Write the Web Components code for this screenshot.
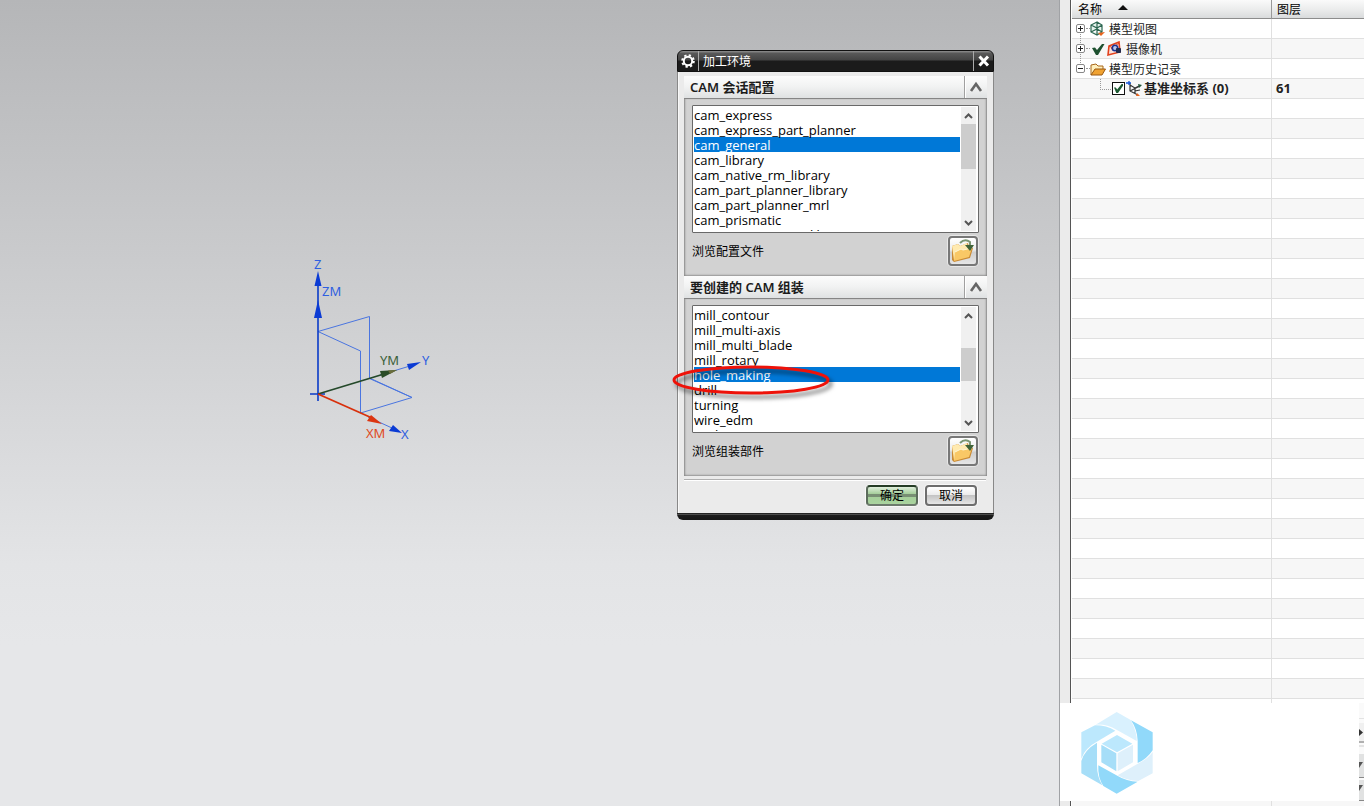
<!DOCTYPE html>
<html lang="zh-CN">
<head>
<meta charset="utf-8">
<title>加工环境</title>
<style>
  html, body { margin: 0; height: 100%; overflow: hidden; }
  body { font-family: "Noto Sans", "Noto Sans CJK SC", sans-serif; font-size: 12px; color: #000; }
</style>
</head>
<body>
<cam-workbench></cam-workbench>
<script>
const define = (name, html, setup) => {
  const tpl = document.createElement('template');
  tpl.innerHTML = html;
  customElements.define(name, class extends HTMLElement {
    connectedCallback() {
      if (this.shadowRoot) return;
      const root = this.attachShadow({ mode: 'open' });
      root.append(tpl.content.cloneNode(true));
      if (setup) setup(this, root);
    }
  });
};

/* Coordinate system drawn in the graphics window */
define('axis-triad', `
<style>
  :host { display: block; width: 140px; height: 200px; }
  svg { display: block; font: 13px "Noto Sans", sans-serif; }
</style>
<svg width="140" height="200" viewBox="300 250 140 200" aria-label="坐标系">
  <g fill="none" stroke="#4a75e0" stroke-width="1">
    <path d="M318 331.500L369.500 316.500V378L412 397.500L360.500 413V351L318 331.500M369.500 378.500L412 397.500"/>
    <path d="M380 375L410 366M368 417L392 428"/>
  </g>
  <path d="M318 394V284M310 394H325M318 387V401" stroke="#0b3bc8" stroke-width="1.600"/>
  <path d="M318 394L384 374" stroke="#24492a" stroke-width="1.800"/>
  <path d="M318 394L372 418" stroke="#d8300c" stroke-width="1.800"/>
  <path d="M318 271L314.500 286H321.500ZM318 300L314 318H322ZM421 362L407 364L409 370ZM402 433L393 425L389 431Z" fill="#0b3bd4"/>
  <path d="M397 370L380 371L382 378Z" fill="#2b4d27"/><path d="M397 370L388 370.500L390 374Z" fill="#6b6d3b"/>
  <path d="M382 424L371 415L367 421Z" fill="#dc3510"/>
  <g fill="#2f5fe0"><text x="314" y="269">Z</text><text x="322" y="296">ZM</text><text x="422" y="365">Y</text><text x="401" y="439">X</text></g>
  <text x="380" y="365" fill="#3a6038">YM</text>
  <text x="366" y="438" fill="#e04a22">XM</text>
</svg>`);

define('list-box', `
<style>
  :host { display: flex; box-sizing: border-box; height: 128px; border: 1px solid #696969; border-radius: 1px; background: #fff; padding: 1px 2px 1px 1px; }
  select { flex: 1; min-width: 0; height: 124px; margin: 0; padding: 0; border: 0; outline: 0; border-radius: 0; background: #fff;
    font: 13px/15px "Open Sans", "Noto Sans", sans-serif; overflow: hidden scroll; scrollbar-width: none; }
  option { display: flex; align-items: center; box-sizing: border-box; height: 15px; min-height: 15px; padding: 0; color: #000; -webkit-text-fill-color: #000; }
  option:checked { background: linear-gradient(#0078d7, #0078d7); -webkit-text-fill-color: #fff; }
  .bar { display: grid; grid-template-rows: 16px var(--before) var(--thumb) 1fr 16px; width: 15px; margin-left: 1px; background: #f0f0f0; }
  .thumb { grid-row: 3; background: #cdcdcd; }
  .down { grid-row: 5; }
  svg { display: block; fill: none; stroke: #555; stroke-width: 2; }
</style>
<select size="8"></select>
<div class="bar" aria-hidden="true">
  <svg width="15" height="16"><path d="M4 11L7.500 7.500L11 11"/></svg>
  <div class="thumb"></div>
  <svg class="down" width="15" height="16"><path d="M4 6L7.500 9.500L11 6"/></svg>
</div>`, (host, root) => {
  const select = root.querySelector('select');
  select.setAttribute('aria-label', host.getAttribute('label'));
  for (const name of host.getAttribute('items').split(' ')) select.add(new Option(name, name));
  select.value = host.getAttribute('value');
  select.scrollTop = 0;
});

define('browse-row', `
<style>
  :host { display: flex; align-items: center; justify-content: space-between; height: 30px; padding-right: 1px; }
  button { width: 30px; height: 30px; padding: 0; border: 2px solid #777; border-radius: 4px; box-shadow: 0 0 0 1px #e8e8e8;
    background: linear-gradient(#fff, #eee 45%, #cfcfcf 55%, #e6e6e6); }
  svg { display: block; margin: auto; }
</style>
<label for="open"><slot></slot></label>
<button id="open" type="button" title="浏览">
  <svg width="26" height="26" viewBox="0 0 26 26">
    <path d="M2 8L8 6L10 8L18 5L19 9L23 10L20 20L4 24L2 22Z" fill="#c98a35"/>
    <path d="M2 8L8 6L10 8L17 5L19 16L4 22Z" fill="#ffeab0"/>
    <path d="M5 14L11 11L13 12L22 10L19 19L4 23Z" fill="#f9c866"/>
    <path d="M5 14L11 11L13 12L22 10" stroke="#fff6d4" fill="none"/>
    <path d="M10 5Q15 0 20 4L20 7" stroke="#7c9673" stroke-width="2" fill="none"/>
    <path d="M15 7H24L20 13Z" fill="#3f6338"/>
  </svg>
</button>`);

define('dialog-section', `
<style>
  :host { display: block; }
  header { display: flex; height: 22px; background: linear-gradient(#fcfcfc, #f1f2f2 50%, #dfe1e2); border-bottom: 1px solid #858585; }
  h2 { flex: 1; margin: 0; padding-left: 6px; font-size: 13px; line-height: 23px; font-weight: 600; color: #1c1c1c; }
  button { width: 23px; padding: 0; border: 0; border-left: 1px solid #a0a0a0; background: none; box-shadow: inset 1px 0 #fff; }
  svg { display: block; margin: auto; }
  .panel { display: flex; flex-direction: column; gap: 3px; padding: 6px 8px 10px; background: #d2d2d2; box-shadow: inset 2px 0 2px -1px #888, inset -2px 0 2px -1px #888, inset 0 -2px 2px -1px #999; }
</style>
<header><h2></h2><button type="button" aria-label="折叠"><svg width="14" height="12" viewBox="0 0 14 12"><path d="M2 10L7 3L12 10" fill="none" stroke="#666" stroke-width="2.600"/></svg></button></header>
<div class="panel"><slot></slot></div>`, (host, root) => {
  root.querySelector('h2').textContent = host.getAttribute('heading');
});

define('push-button', `
<style>
  :host { display: block; }
  button { display: block; width: 52px; height: 21px; padding: 0; border: 2px solid #6d6d6d; border-radius: 4px; box-shadow: 0 0 0 1px #f8f8f8;
    font: inherit; line-height: 18px; color: #000; background: linear-gradient(#fff, #ececec 45%, #c4c4c4 50%, #e6e6e6); }
  :host([primary]) button { border-color: #263d26 #5c6c5c #6d7a6d; background: linear-gradient(#e0eedc, #a5cf9b 40%, #788f74 42%, #788f74 56%, #a5d09a 58%, #aad49f); }
</style>
<button type="button"><slot></slot></button>`);

define('red-ring', `
<style>
  :host { display: block; position: absolute; left: -7px; top: 310px; pointer-events: none; }
  svg { display: block; filter: drop-shadow(3px 4px 2px #0008); }
</style>
<svg width="164" height="40"><ellipse cx="81" cy="20" rx="77" ry="13" fill="none" stroke="#ee1209" stroke-width="3"/></svg>`);

define('cam-dialog', `
<style>
  :host { display: block; position: relative; width: 317px; }
  .title { display: flex; height: 22px; box-sizing: border-box; border: 1px solid #111; border-radius: 6px 6px 0 0; color: #fff; background: linear-gradient(#909090, #585858 12%, #444 45%, #1b1b1b 50%, #1b1b1b); }
  h1 { flex: 1; margin: 0; padding-left: 4px; font-size: 12px; line-height: 21px; font-weight: 400; border: solid #aaa; border-width: 0 1px; }
  .title button { width: 19px; padding: 0; border: 0; background: none; }
  svg { display: block; margin: auto; }
  .gear { width: 20px; display: flex; }
  .body { border: solid #888; border-width: 0 1px; background: #ebebeb; padding: 4px 6px 0; box-shadow: inset 1px 0 #f8f8f8; }
  hr { height: 1px; margin: 3px 1px 0 0; border: 0; background: #b0b0b0; border-bottom: 1px solid #fff; }
  .actions { display: flex; justify-content: flex-end; gap: 7px; padding: 4px 10px 7px 0; }
  .foot { height: 7px; border-radius: 0 0 6px 6px; background: linear-gradient(#111, #555 25%, #1c1c1c 35%, #161616); }
</style>
<div class="title">
  <div class="gear"><svg width="16" height="16" viewBox="0 0 16 16"><circle cx="8" cy="8" r="4.200" fill="none" stroke="#fff" stroke-width="2"/><circle cx="8" cy="8" r="5.800" fill="none" stroke="#fff" stroke-width="2" stroke-dasharray="2.280 2.280"/></svg></div>
  <h1>加工环境</h1>
  <button type="button" aria-label="关闭"><svg width="14" height="14"><path d="M2.500 2.500L11 11.500M11 2.500L2.500 11.500" stroke="#fff" stroke-width="3"/></svg></button>
</div>
<div class="body">
  <dialog-section heading="CAM 会话配置">
    <list-box label="CAM 会话配置" value="cam_general" style="--before:1px;--thumb:45px"
      items="cam_express cam_express_part_planner cam_general cam_library cam_native_rm_library cam_part_planner_library cam_part_planner_mrl cam_prismatic cam_prismatic_rm_library"></list-box>
    <browse-row>浏览配置文件</browse-row>
  </dialog-section>
  <dialog-section heading="要创建的 CAM 组装">
    <list-box label="要创建的 CAM 组装" value="hole_making" style="--before:25px;--thumb:33px"
      items="mill_contour mill_multi-axis mill_multi_blade mill_rotary hole_making drill turning wire_edm probing"></list-box>
    <browse-row>浏览组装部件</browse-row>
  </dialog-section>
  <hr>
  <div class="actions"><push-button primary>确定</push-button><push-button>取消</push-button></div>
</div>
<div class="foot"></div>
<red-ring></red-ring>`);

define('part-navigator', `
<style>
  :host { display: block; box-sizing: border-box; overflow: hidden; border-left: 10px solid #ebebeb; background: #fff; }
  .frame { border-left: 1px solid #555; padding-left: 1px; height: 100%; overflow: hidden; }
  table { width: 100%; table-layout: fixed; border-collapse: separate; border-spacing: 0; }
  th, td { box-sizing: border-box; height: 20px; padding: 0 0 0 4px; border: solid #e0e0e0; border-width: 0 0 1px; text-align: left; font-weight: 400; line-height: 19px; white-space: nowrap; }
  th { height: 19px; line-height: 18px; padding: 0 0 0 6px; background: linear-gradient(#fafafa, #eceded 50%, #d9dbdc); border-bottom-color: #8c8c8c; }
  th:first-child, td:first-child { width: 200px; border-right-width: 1px; }
  th:first-child { border-right-color: #999; }
  th:last-child { padding-left: 5px; }
  tbody tr:nth-child(even) td { background: #f7f7f7; }
  .cell { display: flex; align-items: center; height: 19px; }
  .head { display: flex; height: 18px; line-height: 20px; }
  .sort { width: 0; height: 0; margin: 5px 0 0 16px; border: solid transparent; border-width: 0 5px 5px; border-bottom-color: #111; }
  .twist { position: relative; flex: none; width: 9px; height: 9px; padding: 0; border: 1px solid #888; border-radius: 2px; margin-right: 5px;
    background: linear-gradient(#222, #222) center/5px 1px no-repeat, #fff; }
  .plus { background: linear-gradient(#222, #222) center/5px 1px no-repeat, linear-gradient(#222, #222) center/1px 5px no-repeat, #fff; }
  .twist::before { content: ""; position: absolute; left: 9px; top: 3px; width: 4px; border-top: 1px dotted #999; }
  .plus::after { content: ""; position: absolute; left: 3px; top: 9px; height: 9px; border-left: 1px dotted #999; }
  .elbow { width: 10px; height: 10px; margin: 0 1px 9px 24px; border: dotted #999; border-width: 0 0 1px 1px; }
  input { appearance: none; position: relative; flex: none; width: 13px; height: 13px; margin: 0 1px 0 0; border: 1px solid #111; background: #fff; }
  input::after { content: ""; position: absolute; inset: 1px; background: #1d5a32; clip-path: polygon(0 40%, 20% 40%, 35% 60%, 85% 0, 100% 0, 100% 20%, 45% 100%, 25% 100%); }
  svg { flex: none; display: block; }
  .t { margin-left: 3px; padding-top: 2px; color: #222; }
  b { font-size: 13px; font-weight: 700; color: #222; }
</style>
<div class="frame"><table>
<thead><tr><th><div class="head">名称<span class="sort"></span></div></th><th><div class="head">图层</div></th></tr></thead>
<tbody>
<tr><td><div class="cell"><button class="twist plus" aria-label="展开"></button>
  <svg width="16" height="16" viewBox="0 0 16 16"><path d="M7 1L1 4V11L7 14L12 11V4ZM1 4L7 7L12 4M7 1V14M1 11L7 8L12 11" fill="#e7f3ee" stroke="#2b6650" stroke-width="1.200"/><path d="M8 12L15 11L11 15Z" fill="#e8631c"/></svg><span class="t">模型视图</span></div></td><td></td></tr>
<tr><td><div class="cell"><button class="twist plus" aria-label="展开"></button>
  <svg width="16" height="16" viewBox="0 0 16 16"><path d="M2 7L5 6.500L7 9L12 3L14.500 3L8 14H6Z" fill="#1e5130"/></svg>
  <svg width="17" height="16" viewBox="0 0 17 16"><path d="M3 5L13 1L14 11L2 14Z" fill="#fbe0da" stroke="#e2401c" stroke-width="1.600"/><path d="M3 5L14 11M5 8L13 2" stroke="#e2401c"/><circle cx="9" cy="7" r="2.700" fill="#b9c6ee" stroke="#1b3493" stroke-width="1.600"/><rect x="10" y="7" width="5" height="5" rx="1" fill="#222b4d"/></svg><span class="t">摄像机</span></div></td><td></td></tr>
<tr><td><div class="cell"><button class="twist" aria-label="折叠"></button>
  <svg width="16" height="16" viewBox="0 0 16 16"><path d="M1 14V4L6 3L8 5H13V8" fill="#fff0bd" stroke="#a8661a"/><path d="M1 14L5 8H15.500L12 14Z" fill="#f0a231" stroke="#9a5812"/></svg><span class="t">模型历史记录</span></div></td><td></td></tr>
<tr><td><div class="cell"><span class="elbow"></span><input id="csys" type="checkbox" checked aria-label="基准坐标系 (0)">
  <svg width="18" height="16" viewBox="0 0 18 16"><path d="M4 2V10L12 14M4 10L14 5M4 4L9 7V12M9 7L13 5M9 10L14 9" fill="none" stroke="#333" stroke-width="1.200"/><path d="M0 2H5M3 0V4" stroke="#1556d8" stroke-width="1.300"/><path d="M11 12L14 15L10 15Z" fill="#e8631c"/><path d="M12 3L16 4L13 7Z" fill="#22563a"/></svg><label for="csys"><b>基准坐标系 (0)</b></label></div></td><td><b>61</b></td></tr>
</tbody></table></div>`, (host, root) => {
  const body = root.querySelector('tbody');
  for (let i = 0; i < 36; i++) {
    const row = body.insertRow();
    row.insertCell();
    row.insertCell();
  }
});

define('brand-plate', `
<style>
  :host { display: flex; height: 98px; }
  .plate { flex: 1; background: #fff; padding: 9px 21px; }
  .plate svg { display: block; }
  .strip { width: 5px; box-sizing: border-box; padding-top: 15px; background: #fafafa; overflow: hidden; }
  .strip svg { display: block; }
</style>
<div class="plate"><svg width="72" height="82" viewBox="78 63 216 246" aria-label="logo">
  <path d="M122 101L185 63L227 87Q247 125 245 150L186 117Q155 99 122 101Z" fill="#d9f1fe"/>
  <path d="M228 88L293 124V178Q275 205 248 216V150Q247 115 228 88Z" fill="#91d9fa"/>
  <path d="M293 183V247L250 270Q215 269 188 253L247 219Q280 203 293 183Z" fill="#def0fb"/>
  <path d="M130 223L187 254Q215 271 248 272L185 308L145 285Q128 260 130 223Z" fill="#91d9fa"/>
  <path d="M79 210V247L142 283Q126 258 126 222V155Q88 177 79 210Z" fill="#a6def8"/>
  <path d="M79 124L120 103Q155 103 181 119L128 151Q90 171 79 203Z" fill="#bce8fd"/>
  <path d="M186 132L232 158L186 184L140 158Z" fill="#bce8fd"/>
  <path d="M139 161L184 187V241L139 214Z" fill="#a6def8"/>
  <path d="M188 187L234 161V214L188 241Z" fill="#def0fb"/>
</svg></div>
<div class="strip" aria-hidden="true"><svg width="5" height="83">
  <path d="M0 0H5M0 28H5" stroke="#ccc"/><rect y="5" width="5" height="18" fill="#f0f0f0"/><path d="M0 24H5" stroke="#666"/><path d="M0 11L4 14.500L0 18Z" fill="#333"/>
  <rect y="36" width="5" height="24" fill="#e1e2e2"/><path d="M0 59.500H5M0 82.500H5" stroke="#888"/><path d="M0 44H4L0 50Z" fill="#555"/>
  <rect y="62" width="5" height="20" fill="#e1e2e2"/><path d="M0 67H4L0 73Z" fill="#555"/>
</svg></div>`);

define('cam-workbench', `
<style>
  :host { display: flex; height: 100vh; overflow: hidden; }
  main { position: relative; flex: 1; min-width: 0; border-right: 1px solid #a0a2a5; background: linear-gradient(#b5b6b8, #cfd0d2 40%, #e3e4e6 70%, #e6e7e9 80%, #e6e7e9); }
  axis-triad { position: absolute; left: 300px; top: 250px; }
  cam-dialog { position: absolute; left: 677px; top: 50px; }
  aside { position: relative; display: flex; flex-direction: column; width: 304px; }
  part-navigator { flex: 1; min-height: 0; }
  brand-plate { position: absolute; left: 0; right: 0; bottom: 5px; }
</style>
<main><axis-triad></axis-triad><cam-dialog></cam-dialog></main>
<aside><part-navigator></part-navigator><brand-plate></brand-plate></aside>`);
</script>
</body>
</html>
